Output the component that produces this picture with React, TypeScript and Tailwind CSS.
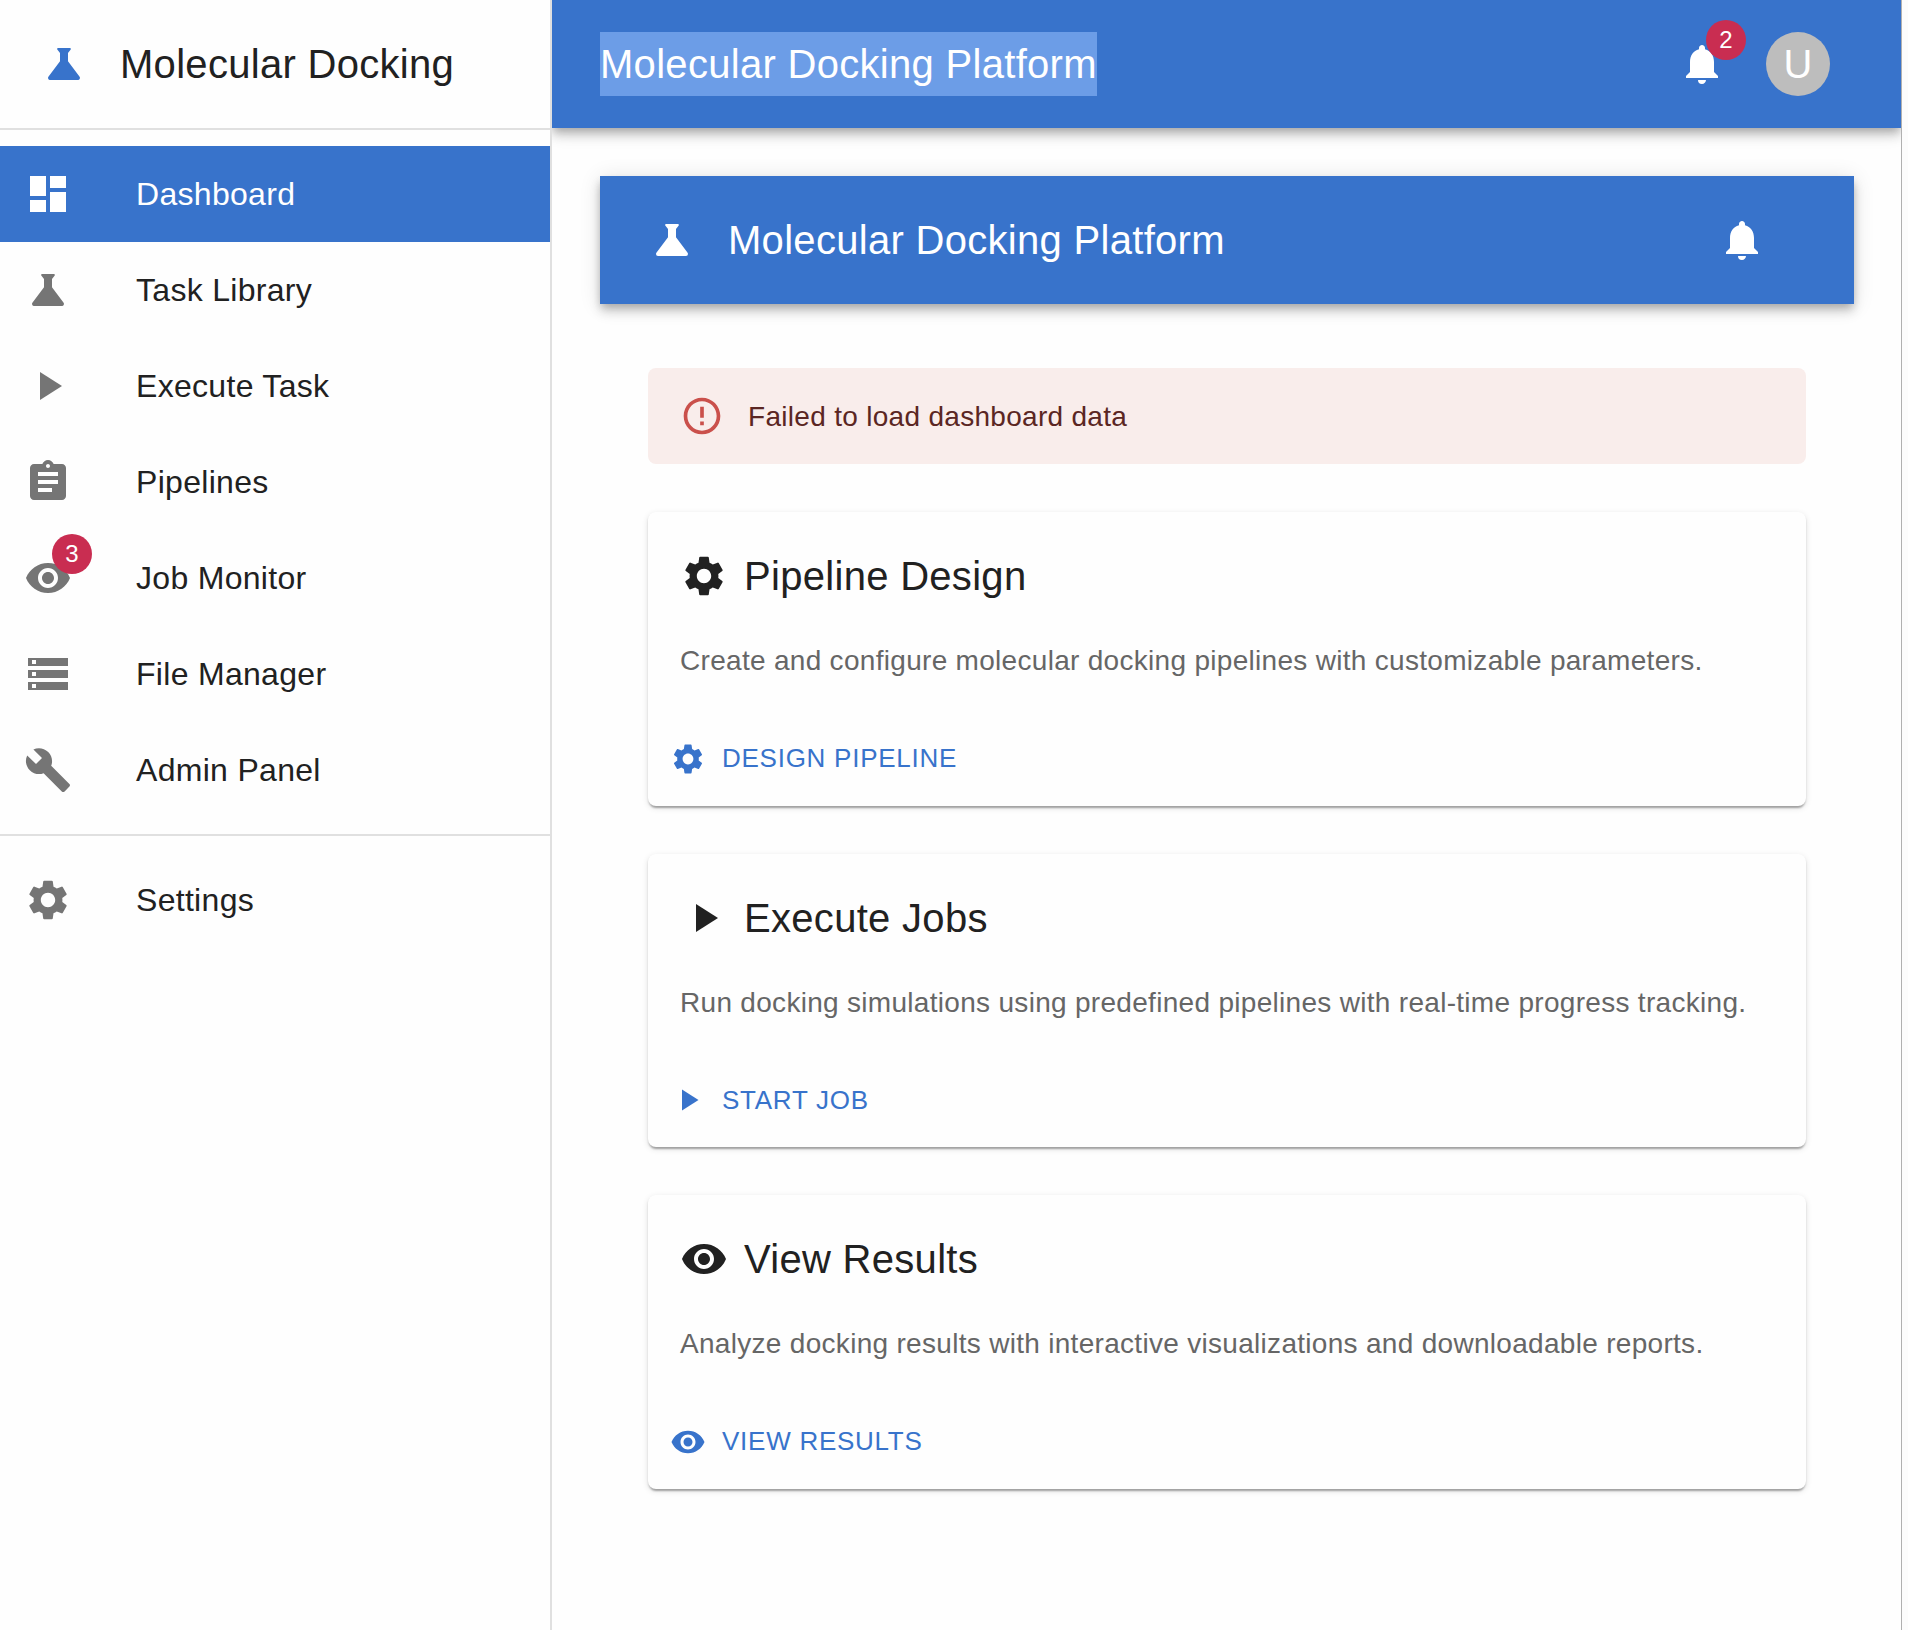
import type { ComponentType } from "react";
import {
  MdAssignment,
  MdBuild,
  MdDashboard,
  MdErrorOutline,
  MdNotifications,
  MdPlayArrow,
  MdScience,
  MdSettings,
  MdStorage,
  MdVisibility,
} from "react-icons/md";

type Icon = ComponentType<{ className?: string }>;

type NavEntry = { label: string; icon: Icon; badge?: number; active?: boolean };

const NAV: NavEntry[] = [
  { label: "Dashboard", icon: MdDashboard, active: true },
  { label: "Task Library", icon: MdScience },
  { label: "Execute Task", icon: MdPlayArrow },
  { label: "Pipelines", icon: MdAssignment },
  { label: "Job Monitor", icon: MdVisibility, badge: 3 },
  { label: "File Manager", icon: MdStorage },
  { label: "Admin Panel", icon: MdBuild },
];

const CARDS: { title: string; text: string; action: string; icon: Icon }[] = [
  {
    title: "Pipeline Design",
    text: "Create and configure molecular docking pipelines with customizable parameters.",
    action: "Design Pipeline",
    icon: MdSettings,
  },
  {
    title: "Execute Jobs",
    text: "Run docking simulations using predefined pipelines with real-time progress tracking.",
    action: "Start Job",
    icon: MdPlayArrow,
  },
  {
    title: "View Results",
    text: "Analyze docking results with interactive visualizations and downloadable reports.",
    action: "View Results",
    icon: MdVisibility,
  },
];

const TITLE = "text-[40px] leading-[64px] tracking-[0.0075em] whitespace-nowrap";
const BAR_SHADOW =
  "shadow-[0_4px_8px_-2px_rgba(0,0,0,0.2),0_8px_10px_0_rgba(0,0,0,0.14),0_2px_20px_0_rgba(0,0,0,0.12)]";
const CARD_SHADOW =
  "shadow-[0_4px_2px_-2px_rgba(0,0,0,0.2),0_2px_2px_0_rgba(0,0,0,0.14),0_2px_6px_0_rgba(0,0,0,0.12)]";

function Badge({ count }: { count: number }) {
  return (
    <span className="absolute -top-5 -right-5 flex size-10 items-center justify-center rounded-full bg-[#c92d51] text-2xl leading-none text-white">
      {count}
    </span>
  );
}

function NavItem({ label, icon: ItemIcon, badge, active }: NavEntry) {
  return (
    <a
      className={
        active
          ? "flex h-24 items-center bg-[#3873cb] px-6 text-white"
          : "flex h-24 items-center px-6 text-[#212121]"
      }
    >
      <span className="w-28 shrink-0">
        <span className={active ? "relative block size-12 text-white" : "relative block size-12 text-[#757575]"}>
          <ItemIcon className="size-12" />
          {badge !== undefined && <Badge count={badge} />}
        </span>
      </span>
      <span className="text-[32px] leading-[48px] tracking-[0.00938em] whitespace-nowrap">{label}</span>
    </a>
  );
}

export default function App() {
  return (
    <div className="flex h-[1630px] w-[1908px] overflow-hidden bg-[#fcfcfc] font-['Liberation_Sans',Arial,sans-serif] text-[#212121]">
      <aside className="relative z-10 w-[552px] shrink-0 border-r-2 border-[#e0e0e0] bg-[#fefefe]">
        <div className="flex h-32 items-center gap-8 pl-10">
          <MdScience className="size-12 text-[#3873cb]" />
          <h1 className={TITLE}>Molecular Docking</h1>
        </div>
        <nav className="border-y-2 border-[#e0e0e0] py-4">
          {NAV.map((item) => (
            <NavItem key={item.label} {...item} />
          ))}
        </nav>
        <nav className="py-4">
          <NavItem label="Settings" icon={MdSettings} />
        </nav>
      </aside>

      <div className="w-[1350px] shrink-0 overflow-hidden border-r border-[#b0b0b0] bg-[#fefefe]">
        <header className={`relative flex h-32 items-center bg-[#3873cb] pr-[71px] pl-12 text-white ${BAR_SHADOW}`}>
          <h2 className={`${TITLE} bg-[#6c9de7]`}>Molecular Docking Platform</h2>
          <div className="ml-auto flex items-center gap-10">
            <span className="relative block size-12">
              <MdNotifications className="size-12" />
              <Badge count={2} />
            </span>
            <span className="flex size-16 items-center justify-center rounded-full bg-[#bdbdbd] text-[40px] leading-none">
              U
            </span>
          </div>
        </header>

        <main className="pt-12 pr-[47px] pl-12">
          <div className={`flex h-32 items-center bg-[#3873cb] pr-[88px] pl-12 text-white ${BAR_SHADOW}`}>
            <MdScience className="mr-8 size-12" />
            <h2 className={TITLE}>Molecular Docking Platform</h2>
            <MdNotifications className="ml-auto size-12" />
          </div>

          <div className="flex flex-col gap-12 px-12 pt-16">
            <div className="flex h-24 items-center gap-6 rounded-lg bg-[#f9edeb] px-8">
              <MdErrorOutline className="size-11 text-[#ca504b]" />
              <p className="pt-0.5 text-[28px] leading-[40px] tracking-[0.01071em] text-[#5b2623]">
                Failed to load dashboard data
              </p>
            </div>

            {CARDS.map(({ title, text, action, icon: CardIcon }) => (
              <section key={title} className={`rounded-lg bg-[#fefefe] ${CARD_SHADOW}`}>
                <div className="flex flex-col gap-8 p-8">
                  <div className="flex items-center gap-4">
                    <CardIcon className="size-12" />
                    <h3 className={TITLE}>{title}</h3>
                  </div>
                  <p className="-mb-px pt-px text-[28px] leading-[40.04px] tracking-[0.01071em] whitespace-nowrap text-[#666666]">
                    {text}
                  </p>
                </div>
                <div className="flex p-4">
                  <button className="flex items-center gap-4 px-1.5 py-2 text-[26px] leading-[45.5px] tracking-[0.02857em] text-[#3873cb] uppercase">
                    <CardIcon className="size-9" />
                    {action}
                  </button>
                </div>
              </section>
            ))}
          </div>
        </main>
      </div>
    </div>
  );
}
